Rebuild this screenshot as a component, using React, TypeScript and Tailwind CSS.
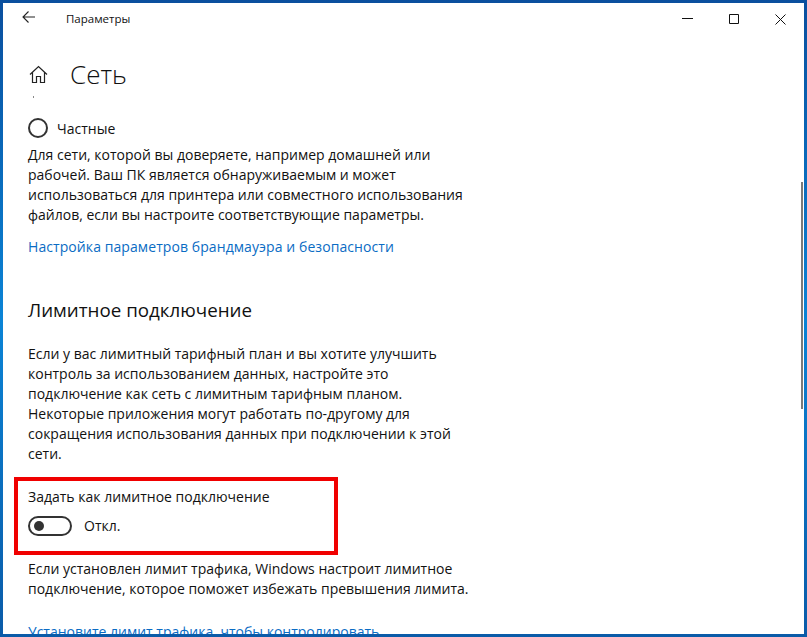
import React from "react";

const P = ({ lines, className = "" }: { lines: string[]; className?: string }) => (
  <p className={`text-[14px] leading-[20px] text-[#111] ${className}`}>
    {lines.map((l) => (
      <span key={l} className="block whitespace-nowrap">{l}</span>
    ))}
  </p>
);

export default function App() {
  return (
    <div className="h-[637px] w-[807px] overflow-hidden bg-gradient-to-b from-[#0a4f9e] via-[#0a84d6] to-[#0a5ba8] p-[3px] font-['Open_Sans','Noto_Sans',sans-serif]">
      <div className="relative flex h-[631px] w-[801px] flex-col overflow-hidden bg-white">
        <header className="flex h-[32px] shrink-0 items-center text-[#111]">
          <svg className="ml-[19px] mt-[-4px] h-[14px] w-[14px]" viewBox="0 0 14 14" fill="none" stroke="#222" strokeWidth="1.1">
            <path d="M13 7H1M6.5 1.5 1 7l5.5 5.5" />
          </svg>
          <span className="ml-[30px] text-[11.5px]">Параметры</span>
          <div className="ml-auto mr-[18px] flex items-center gap-[36px]">
            <svg className="h-[12px] w-[11px]" viewBox="0 0 11 12" fill="none" stroke="#111" strokeWidth="1"><path d="M0 5.5h11" /></svg>
            <svg className="h-[10px] w-[10px]" viewBox="0 0 10 10" fill="none" stroke="#111" strokeWidth="1"><path d="M.5.5h9v9h-9z" /></svg>
            <svg className="h-[11px] w-[11px]" viewBox="0 0 11 11" fill="none" stroke="#111" strokeWidth="1"><path d="M.5.5l10 10M10.5.5l-10 10" /></svg>
          </div>
        </header>

        <div className="mt-[21px] flex h-[36px] shrink-0 items-center pl-[26px]">
          <svg className="h-[19px] w-[19px]" viewBox="0 0 19 19" fill="none" stroke="#222" strokeWidth="1.2">
            <path d="M1 9.5 9.5 1.5 18 9.5M3.5 7.5V17.5H7.5V11.5H11.5V17.5H15.5V7.5" />
          </svg>
          <h1 className="ml-[22px] text-[26px] font-light leading-[36px] text-[#111]">Сеть</h1>
        </div>

        <div className="ml-[30px] mt-[4px] h-[2px] w-[1px] shrink-0 bg-[#888]" />

        <main className="flex flex-col pl-[25px]">
          <label className="mt-[20px] flex h-[20px] items-center">
            <span className="h-[20px] w-[20px] rounded-full border-2 border-[#333]" />
            <span className="ml-[9px] text-[14px] text-[#111]">Частные</span>
          </label>
          <P
            className="mt-[7px]"
            lines={[
              "Для сети, которой вы доверяете, например домашней или",
              "рабочей. Ваш ПК является обнаруживаемым и может",
              "использоваться для принтера или совместного использования",
              "файлов, если вы настроите соответствующие параметры.",
            ]}
          />
          <a className="mt-[12px] text-[14px] leading-[20px] tracking-[0.08px] whitespace-nowrap text-[#0a6cc4]">
            Настройка параметров брандмауэра и безопасности
          </a>
          <h2 className="mt-[39px] text-[18.75px] leading-[28px] text-[#111]">Лимитное подключение</h2>
          <P
            className="mt-[20px]"
            lines={[
              "Если у вас лимитный тарифный план и вы хотите улучшить",
              "контроль за использованием данных, настройте это",
              "подключение как сеть с лимитным тарифным планом.",
              "Некоторые приложения могут работать по-другому для",
              "сокращения использования данных при подключении к этой",
              "сети.",
            ]}
          />
          <section className="mt-[13px] ml-[-14px] h-[78px] w-[324px] border-4 border-[#f00000] pl-[10px] pt-[6px]">
            <div className="text-[14px] leading-[20px] whitespace-nowrap text-[#111]">Задать как лимитное подключение</div>
            <div className="mt-[9px] flex items-center">
              <span className="flex h-[20px] w-[44px] items-center rounded-full border-2 border-[#333] pl-[4px]">
                <span className="h-[10px] w-[10px] rounded-full bg-[#333]" />
              </span>
              <span className="ml-[12px] text-[14px] leading-[20px] text-[#111]">Откл.</span>
            </div>
          </section>
          <P
            className="mt-[4px]"
            lines={[
              "Если установлен лимит трафика, Windows настроит лимитное",
              "подключение, которое поможет избежать превышения лимита.",
            ]}
          />
          <a className="mt-[23px] text-[14px] leading-[20px] whitespace-nowrap text-[#0a6cc4]">
            Установите лимит трафика, чтобы контролировать
          </a>
        </main>

        <div className="absolute right-[1px] top-[179px] h-[227px] w-[2px] bg-[#7a7a7a]" />
      </div>
    </div>
  );
}
